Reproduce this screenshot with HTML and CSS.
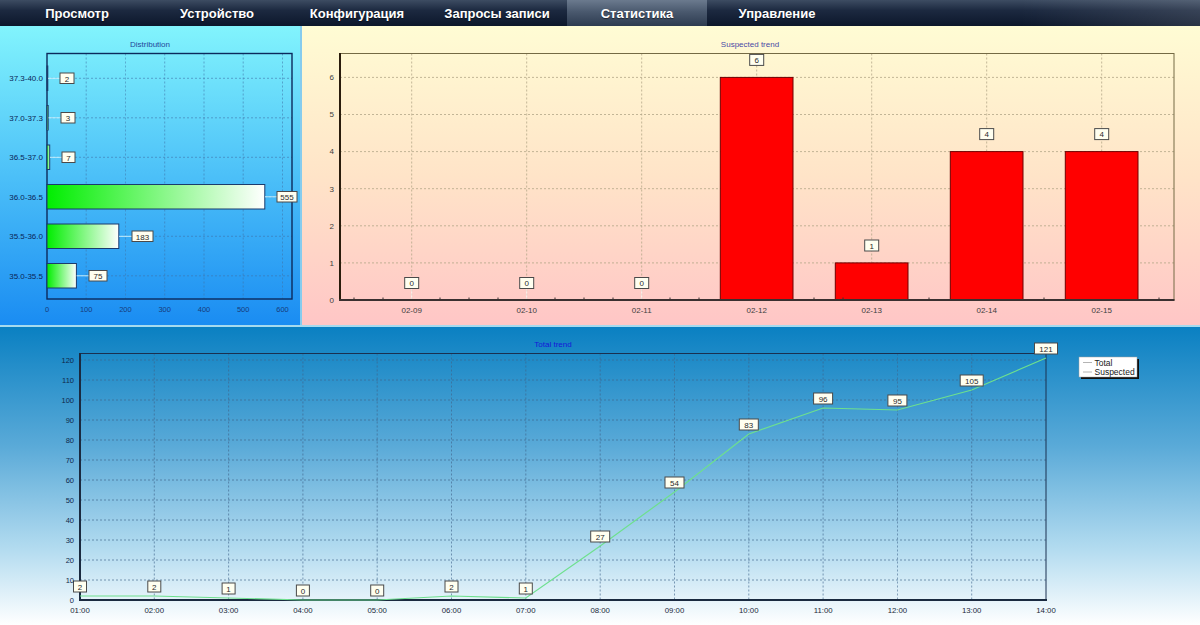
FILE: index.html
```html
<!DOCTYPE html>
<html lang="ru">
<head>
<meta charset="utf-8">
<title>Статистика</title>
<link rel="stylesheet" href="styles.css">
</head>
<body>
<nav class="nav">
  <div class="nav-item">Просмотр</div>
  <div class="nav-item">Устройство</div>
  <div class="nav-item">Конфигурация</div>
  <div class="nav-item">Запросы записи</div>
  <div class="nav-item active">Статистика</div>
  <div class="nav-item">Управление</div>
</nav>
<div class="top">
  <section class="panel panel-dist">
    <svg class="chart" width="300" height="299" viewBox="0 26 300 299">
      <defs>
        <linearGradient id="barg" x1="0" y1="0" x2="1" y2="0">
          <stop offset="0" stop-color="#00ee00"/>
          <stop offset="1" stop-color="#ffffff"/>
        </linearGradient>
      </defs>
      <text class="t-title dist-title" x="150" y="47">Distribution</text>
      <g class="grid-dist">
        <line x1="86.2" y1="53.5" x2="86.2" y2="299"/>
        <line x1="125.4" y1="53.5" x2="125.4" y2="299"/>
        <line x1="164.7" y1="53.5" x2="164.7" y2="299"/>
        <line x1="204" y1="53.5" x2="204" y2="299"/>
        <line x1="243.2" y1="53.5" x2="243.2" y2="299"/>
        <line x1="282.5" y1="53.5" x2="282.5" y2="299"/>
        <line x1="47" y1="78.3" x2="292" y2="78.3"/>
        <line x1="47" y1="117.8" x2="292" y2="117.8"/>
        <line x1="47" y1="157.3" x2="292" y2="157.3"/>
        <line x1="47" y1="196.8" x2="292" y2="196.8"/>
        <line x1="47" y1="236.3" x2="292" y2="236.3"/>
        <line x1="47" y1="275.8" x2="292" y2="275.8"/>
      </g>
      <rect class="frame-dist" x="47" y="53.5" width="245" height="245.5"/>
      <g class="bars-dist">
        <rect x="47" y="66" width="0.8" height="24.5"/>
        <rect x="47" y="105.5" width="1.2" height="24.5"/>
        <rect x="47" y="145" width="2.7" height="24.5"/>
        <rect x="47" y="184.5" width="217.8" height="24.5"/>
        <rect x="47" y="224" width="71.8" height="24.5"/>
        <rect x="47" y="263.5" width="29.4" height="24.5"/>
      </g>
      <g class="lead-dist">
        <line x1="48" y1="78.3" x2="60" y2="78.3"/>
        <line x1="48.5" y1="117.8" x2="61" y2="117.8"/>
        <line x1="50" y1="157.3" x2="62" y2="157.3"/>
        <line x1="265" y1="196.8" x2="277" y2="196.8"/>
        <line x1="119" y1="236.3" x2="132" y2="236.3"/>
        <line x1="76.6" y1="275.8" x2="89" y2="275.8"/>
      </g>
      <g class="vbox">
        <rect x="60" y="73" width="14" height="10.5"/>
        <rect x="61" y="112.5" width="14" height="10.5"/>
        <rect x="62" y="152" width="13" height="10.5"/>
        <rect x="277" y="191.5" width="20" height="10.5"/>
        <rect x="132" y="231" width="21" height="10.5"/>
        <rect x="89" y="270.5" width="18" height="10.5"/>
      </g>
      <g class="vtext">
        <text x="67" y="81.5">2</text>
        <text x="68" y="121">3</text>
        <text x="68.5" y="160.5">7</text>
        <text x="287" y="200">555</text>
        <text x="142.5" y="239.5">183</text>
        <text x="98" y="279">75</text>
      </g>
      <g class="cat-dist">
        <text x="43" y="81">37.3-40.0</text>
        <text x="43" y="120.5">37.0-37.3</text>
        <text x="43" y="160">36.5-37.0</text>
        <text x="43" y="199.5">36.0-36.5</text>
        <text x="43" y="239">35.5-36.0</text>
        <text x="43" y="278.5">35.0-35.5</text>
      </g>
      <g class="xax-dist">
        <text x="47" y="312">0</text>
        <text x="86.2" y="312">100</text>
        <text x="125.4" y="312">200</text>
        <text x="164.7" y="312">300</text>
        <text x="204" y="312">400</text>
        <text x="243.2" y="312">500</text>
        <text x="282.5" y="312">600</text>
      </g>
    </svg>
  </section>
  <section class="panel panel-susp">
    <svg class="chart" width="898" height="299" viewBox="302 26 898 299">
      <text class="t-title susp-title" x="750" y="47">Suspected trend</text>
      <g class="grid-susp">
        <line x1="340" y1="262.9" x2="1174" y2="262.9"/>
        <line x1="340" y1="225.8" x2="1174" y2="225.8"/>
        <line x1="340" y1="188.7" x2="1174" y2="188.7"/>
        <line x1="340" y1="151.6" x2="1174" y2="151.6"/>
        <line x1="340" y1="114.5" x2="1174" y2="114.5"/>
        <line x1="340" y1="77.4" x2="1174" y2="77.4"/>
        <line x1="411.7" y1="53.5" x2="411.7" y2="300"/>
        <line x1="526.7" y1="53.5" x2="526.7" y2="300"/>
        <line x1="641.7" y1="53.5" x2="641.7" y2="300"/>
        <line x1="756.7" y1="53.5" x2="756.7" y2="300"/>
        <line x1="871.7" y1="53.5" x2="871.7" y2="300"/>
        <line x1="986.7" y1="53.5" x2="986.7" y2="300"/>
        <line x1="1101.7" y1="53.5" x2="1101.7" y2="300"/>
      </g>
      <rect class="frame-susp" x="340" y="53.5" width="834" height="246.5"/>
      <g class="lead-susp">
        <line x1="411.7" y1="288.5" x2="411.7" y2="299"/>
        <line x1="526.7" y1="288.5" x2="526.7" y2="299"/>
        <line x1="641.7" y1="288.5" x2="641.7" y2="299"/>
      </g>
      <g class="bars-susp">
        <rect x="720.3" y="77.4" width="72.7" height="222.6"/>
        <rect x="835.3" y="262.9" width="72.7" height="37.1"/>
        <rect x="950.3" y="151.6" width="72.7" height="148.4"/>
        <rect x="1065.3" y="151.6" width="72.7" height="148.4"/>
      </g>
      <line class="axis-susp-y" x1="340" y1="53" x2="340" y2="301"/>
      <line class="axis-susp-x" x1="339" y1="300" x2="1174.5" y2="300"/>
      <g class="ticks-susp">
        <line x1="354" y1="297.5" x2="354" y2="300"/><line x1="383" y1="297.5" x2="383" y2="300"/><line x1="440" y1="297.5" x2="440" y2="300"/><line x1="469" y1="297.5" x2="469" y2="300"/><line x1="498" y1="297.5" x2="498" y2="300"/>
        <line x1="555" y1="297.5" x2="555" y2="300"/><line x1="584" y1="297.5" x2="584" y2="300"/><line x1="613" y1="297.5" x2="613" y2="300"/><line x1="670" y1="297.5" x2="670" y2="300"/><line x1="699" y1="297.5" x2="699" y2="300"/>
        <line x1="814" y1="297.5" x2="814" y2="300"/><line x1="843" y1="297.5" x2="843" y2="300"/><line x1="929" y1="297.5" x2="929" y2="300"/><line x1="1044" y1="297.5" x2="1044" y2="300"/><line x1="1159" y1="297.5" x2="1159" y2="300"/>
      </g>
      <g class="vbox sbox">
        <rect x="404.7" y="277.5" width="14" height="11"/>
        <rect x="519.7" y="277.5" width="14" height="11"/>
        <rect x="634.7" y="277.5" width="14" height="11"/>
        <rect x="749.7" y="54.4" width="14" height="11"/>
        <rect x="864.7" y="240" width="14" height="11"/>
        <rect x="979.7" y="128.6" width="14" height="11"/>
        <rect x="1094.7" y="128.6" width="14" height="11"/>
      </g>
      <g class="vtext">
        <text x="411.7" y="286">0</text>
        <text x="526.7" y="286">0</text>
        <text x="641.7" y="286">0</text>
        <text x="756.7" y="62.9">6</text>
        <text x="871.7" y="248.5">1</text>
        <text x="986.7" y="137.1">4</text>
        <text x="1101.7" y="137.1">4</text>
      </g>
      <g class="yax-susp">
        <text x="334" y="302.8">0</text>
        <text x="334" y="265.7">1</text>
        <text x="334" y="228.6">2</text>
        <text x="334" y="191.5">3</text>
        <text x="334" y="154.4">4</text>
        <text x="334" y="117.3">5</text>
        <text x="334" y="80.2">6</text>
      </g>
      <g class="xax-susp">
        <text x="411.7" y="313">02-09</text>
        <text x="526.7" y="313">02-10</text>
        <text x="641.7" y="313">02-11</text>
        <text x="756.7" y="313">02-12</text>
        <text x="871.7" y="313">02-13</text>
        <text x="986.7" y="313">02-14</text>
        <text x="1101.7" y="313">02-15</text>
      </g>
    </svg>
  </section>
</div>
<section class="panel panel-total">
  <svg class="chart" width="1200" height="298" viewBox="0 327 1200 298">
    <text class="t-title total-title" x="553" y="347">Total trend</text>
    <g class="grid-total">
      <line x1="154.3" y1="353.5" x2="154.3" y2="600"/>
      <line x1="228.6" y1="353.5" x2="228.6" y2="600"/>
      <line x1="302.9" y1="353.5" x2="302.9" y2="600"/>
      <line x1="377.2" y1="353.5" x2="377.2" y2="600"/>
      <line x1="451.5" y1="353.5" x2="451.5" y2="600"/>
      <line x1="525.8" y1="353.5" x2="525.8" y2="600"/>
      <line x1="600.2" y1="353.5" x2="600.2" y2="600"/>
      <line x1="674.5" y1="353.5" x2="674.5" y2="600"/>
      <line x1="748.8" y1="353.5" x2="748.8" y2="600"/>
      <line x1="823.1" y1="353.5" x2="823.1" y2="600"/>
      <line x1="897.4" y1="353.5" x2="897.4" y2="600"/>
      <line x1="971.7" y1="353.5" x2="971.7" y2="600"/>
      <line x1="80" y1="580" x2="1046" y2="580"/>
      <line x1="80" y1="560" x2="1046" y2="560"/>
      <line x1="80" y1="540" x2="1046" y2="540"/>
      <line x1="80" y1="520" x2="1046" y2="520"/>
      <line x1="80" y1="500" x2="1046" y2="500"/>
      <line x1="80" y1="480" x2="1046" y2="480"/>
      <line x1="80" y1="460" x2="1046" y2="460"/>
      <line x1="80" y1="440" x2="1046" y2="440"/>
      <line x1="80" y1="420" x2="1046" y2="420"/>
      <line x1="80" y1="400" x2="1046" y2="400"/>
      <line x1="80" y1="380" x2="1046" y2="380"/>
      <line x1="80" y1="360" x2="1046" y2="360"/>
    </g>
    <rect class="frame-total" x="80" y="353.5" width="966" height="246.5"/>
    <line class="axis-total" x1="80" y1="353" x2="80" y2="601"/>
    <line class="axis-total" x1="79" y1="600" x2="1047" y2="600"/>
    <polyline class="line-total" points="80,596 154.3,596 228.6,598 302.9,600 377.2,600 451.5,596 525.8,598 600.2,546 674.5,492 748.8,434 823.1,408 897.4,410 971.7,390 1046,358"/>
    <g class="vbox">
      <rect x="73.5" y="581" width="13" height="11"/>
      <rect x="147.8" y="581" width="13" height="11"/>
      <rect x="222.1" y="583" width="13" height="11"/>
      <rect x="296.4" y="585" width="13" height="11"/>
      <rect x="370.7" y="585" width="13" height="11"/>
      <rect x="445" y="581" width="13" height="11"/>
      <rect x="519.3" y="583" width="13" height="11"/>
      <rect x="590.7" y="531" width="19" height="11"/>
      <rect x="665" y="477" width="19" height="11"/>
      <rect x="739.3" y="419" width="19" height="11"/>
      <rect x="813.6" y="393" width="19" height="11"/>
      <rect x="887.9" y="395" width="19" height="11"/>
      <rect x="960.2" y="375" width="23" height="11"/>
      <rect x="1034.5" y="343" width="23" height="11"/>
    </g>
    <g class="vtext">
      <text x="80" y="589.5">2</text>
      <text x="154.3" y="589.5">2</text>
      <text x="228.6" y="591.5">1</text>
      <text x="302.9" y="593.5">0</text>
      <text x="377.2" y="593.5">0</text>
      <text x="451.5" y="589.5">2</text>
      <text x="525.8" y="591.5">1</text>
      <text x="600.2" y="539.5">27</text>
      <text x="674.5" y="485.5">54</text>
      <text x="748.8" y="427.5">83</text>
      <text x="823.1" y="401.5">96</text>
      <text x="897.4" y="403.5">95</text>
      <text x="971.7" y="383.5">105</text>
      <text x="1046" y="351.5">121</text>
    </g>
    <g class="yax-total">
      <text x="74" y="603">0</text>
      <text x="74" y="583">10</text>
      <text x="74" y="563">20</text>
      <text x="74" y="543">30</text>
      <text x="74" y="523">40</text>
      <text x="74" y="503">50</text>
      <text x="74" y="483">60</text>
      <text x="74" y="463">70</text>
      <text x="74" y="443">80</text>
      <text x="74" y="423">90</text>
      <text x="74" y="403">100</text>
      <text x="74" y="383">110</text>
      <text x="74" y="363">120</text>
    </g>
    <g class="xax-total">
      <text x="80" y="613">01:00</text>
      <text x="154.3" y="613">02:00</text>
      <text x="228.6" y="613">03:00</text>
      <text x="302.9" y="613">04:00</text>
      <text x="377.2" y="613">05:00</text>
      <text x="451.5" y="613">06:00</text>
      <text x="525.8" y="613">07:00</text>
      <text x="600.2" y="613">08:00</text>
      <text x="674.5" y="613">09:00</text>
      <text x="748.8" y="613">10:00</text>
      <text x="823.1" y="613">11:00</text>
      <text x="897.4" y="613">12:00</text>
      <text x="971.7" y="613">13:00</text>
      <text x="1046" y="613">14:00</text>
    </g>
    <g class="legend">
      <rect class="legend-shadow" x="1081" y="359" width="58" height="20"/>
      <rect class="legend-box" x="1079" y="357" width="58" height="20"/>
      <line class="legend-line" x1="1083" y1="362.5" x2="1092" y2="362.5"/>
      <line class="legend-line" x1="1083" y1="372" x2="1092" y2="372"/>
      <text class="legend-text" x="1094.5" y="365.5">Total</text>
      <text class="legend-text" x="1094.5" y="375">Suspected</text>
    </g>
  </svg>
</section>
</body>
</html>
```

FILE: styles.css
```css
* { box-sizing: border-box; }
html, body { margin: 0; padding: 0; }
body {
  width: 1200px;
  height: 625px;
  overflow: hidden;
  background: #ffffff;
  font-family: "Liberation Sans", Arial, sans-serif;
}

.nav {
  height: 26px;
  display: flex;
  padding-left: 7px;
  background:
    linear-gradient(90deg, rgba(255,255,255,0) 85%, rgba(255,255,255,0.12) 100%),
    linear-gradient(180deg, #3d4c62 0%, #1c2940 40%, #0c172b 100%);
}
.nav-item {
  width: 140px;
  display: flex;
  align-items: center;
  justify-content: center;
  color: #ffffff;
  font-weight: bold;
  font-size: 13px;
  text-shadow: 0 1px 1px rgba(0,0,0,0.5);
}
.nav-item.active {
  background: linear-gradient(180deg, #6b7a8e 0%, #4a596e 45%, #2d3b50 100%);
}

.top {
  display: flex;
  height: 301px;
  border-bottom: 2px solid #a6daee;
}
.panel { overflow: hidden; }
.panel-dist {
  width: 300px;
  background: linear-gradient(180deg, #82f4fd 0%, #4cc0f8 50%, #1a8cf2 100%);
}
.panel-susp {
  flex: 1;
  border-left: 2px solid #86ccee;
  background: linear-gradient(180deg, #fffcd4 0%, #ffe4c8 50%, #ffc6c6 100%);
}
.panel-total {
  height: 298px;
  background: linear-gradient(180deg, #0a80c2 0%, #5aaad8 40%, #b4dcf0 75%, #ffffff 100%);
}

.chart { display: block; }
.chart text { font-family: "Liberation Sans", Arial, sans-serif; }

.t-title { font-size: 8px; text-anchor: middle; }
.dist-title { fill: #24479a; }
.susp-title { fill: #4a4aa6; }
.total-title { fill: #1616d8; }

.grid-dist line { stroke: #3f74a8; stroke-width: 0.8; stroke-dasharray: 2 2; opacity: 0.7; }
.frame-dist { fill: none; stroke: #0c2a5c; stroke-width: 1.4; }
.bars-dist rect { fill: url(#barg); stroke: #1b3b6c; stroke-width: 1; }
.lead-dist line { stroke: #c8f2ff; stroke-width: 1; }
.cat-dist text { font-size: 8px; fill: #0a2658; text-anchor: end; }
.xax-dist text { font-size: 7.5px; fill: #173c7c; text-anchor: middle; }

.vbox rect { fill: #fffff0; stroke: #4a4a4a; stroke-width: 1; }
.vtext text { font-size: 8px; fill: #2a2a2a; text-anchor: middle; }

.grid-susp line { stroke: #b2a688; stroke-width: 0.8; stroke-dasharray: 2 2; }
.frame-susp { fill: none; stroke: #746a44; stroke-width: 1; }
.bars-susp rect { fill: #ff0000; stroke: #6e0000; stroke-width: 1; }
.lead-susp line { stroke: #ffffff; stroke-width: 1; opacity: 0.7; }
.axis-susp-y { stroke: #2a1c0c; stroke-width: 2; }
.axis-susp-x { stroke: #3a3030; stroke-width: 2; }
.ticks-susp line { stroke: #3a3030; stroke-width: 1; }
.yax-susp text { font-size: 8px; fill: #404040; text-anchor: end; }
.xax-susp text { font-size: 8px; fill: #404040; text-anchor: middle; }

.grid-total line { stroke: #40648c; stroke-width: 0.8; stroke-dasharray: 2 2; opacity: 0.8; }
.frame-total { fill: none; stroke: #1a3050; stroke-width: 1; }
.axis-total { stroke: #1a2a40; stroke-width: 2; }
.line-total { fill: none; stroke: #6ee08e; stroke-width: 1.2; }
.yax-total text { font-size: 7.5px; fill: #10284a; text-anchor: end; }
.xax-total text { font-size: 7.8px; fill: #1a2a3a; text-anchor: middle; }

.legend-shadow { fill: #101010; }
.legend-box { fill: #ffffff; stroke: #a0a0a0; stroke-width: 0.5; }
.legend-line { stroke: #b4b4b4; stroke-width: 1; }
.legend-text { font-size: 8.5px; fill: #202020; }
```
